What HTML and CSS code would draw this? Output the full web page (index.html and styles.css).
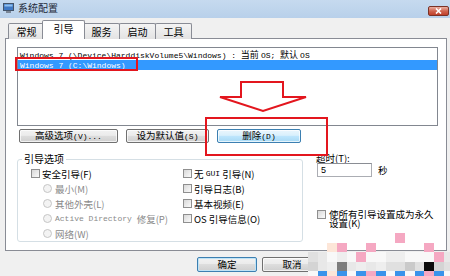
FILE: index.html
```html
<!DOCTYPE html>
<html>
<head>
<meta charset="utf-8">
<link rel="stylesheet" href="styles.css">
</head>
<body>
<div class="win">
  <div class="titlebar">
    <svg class="appicon" viewBox="0 0 11 10"><rect x="0.5" y="0.5" width="10" height="7" fill="#3f78c4" stroke="#44546a"/><rect x="1.5" y="1.5" width="8" height="2" fill="#8fc0f0"/><rect x="3" y="8" width="5" height="2" fill="#7a8696"/></svg>
    <span class="title">系统配置</span>
    <span class="close"><svg viewBox="0 0 7 6" width="7" height="6"><path d="M1 0.5 L6 5.5 M6 0.5 L1 5.5" stroke="#fff" stroke-width="1.6"/></svg></span>
  </div>
  <div class="main">
    <div class="tabs">
      <div class="tab">常规</div>
      <div class="tab sel">引导</div>
      <div class="tab">服务</div>
      <div class="tab">启动</div>
      <div class="tab">工具</div>
    </div>
    <div class="panel">
      <div class="listbox">
        <div class="row"><span class="m">Windows 7 (\Device\HarddiskVolume5\Windows) : </span>当前 <span class="m">OS; </span>默认 <span class="m">OS</span></div>
        <div class="row sel"><span class="m">Windows 7 (C:\Windows)</span></div>
      </div>
      <div class="btnrow">
        <button class="btn w1">高级选项<span class="m">(V)...</span></button>
        <button class="btn w2">设为默认值<span class="m">(S)</span></button>
        <button class="btn w3 hot">删除<span class="m">(D)</span></button>
      </div>
      <div class="lower">
        <fieldset class="group">
          <legend>引导选项</legend>
          <div class="cols">
            <div class="col left">
              <div class="opt"><span class="cb"></span>安全引导(F)</div>
              <div class="opt sub dis"><span class="rb"></span>最小(M)</div>
              <div class="opt sub dis"><span class="rb"></span>其他外壳(L)</div>
              <div class="opt sub dis"><span class="rb"></span><span class="m">Active Directory&nbsp;</span>修复(P)</div>
              <div class="opt sub dis"><span class="rb"></span>网络(W)</div>
            </div>
            <div class="col right">
              <div class="opt"><span class="cb"></span>无 <span class="m">GUI</span> 引导(N)</div>
              <div class="opt"><span class="cb"></span>引导日志(B)</div>
              <div class="opt"><span class="cb"></span>基本视频(E)</div>
              <div class="opt"><span class="cb"></span>OS 引导信息(O)</div>
            </div>
          </div>
        </fieldset>
        <div class="side">
          <div class="lbl">超时(T):</div>
          <div class="timeout"><span class="input">5</span><span>秒</span></div>
          <div class="perm"><span class="cb"></span><span class="ptext">使所有引导设置成为永久设置(K)</span></div>
        </div>
      </div>
    </div>
    <div class="footer">
      <button class="btn fb def">确定</button>
      <button class="btn fb">取消</button>
      <button class="btn fb">应用(A)</button>
    </div>
  </div>

  <div class="hl hl1"></div>
  <div class="hl hl2"></div>
  <svg class="arrow" viewBox="0 0 92 34"><polygon points="23,2 65,2 65,17 88,17 45,31 2,17 23,17" fill="#fff" stroke="#e3161e" stroke-width="2"/></svg>

  <div class="mosaic">
    <i class="c"></i><i class="c"></i><i class="c"></i><i class="c"></i><i class="c"></i><i class="c"></i><i class="c"></i><i class="c"></i><i class="c"></i><i class="p"></i><i class="c"></i><i class="c"></i><i class="c"></i><i class="c"></i><i class="c"></i>
    <i class="c"></i><i class="c"></i><i class="e"></i><i class="p"></i><i class="c"></i><i class="c"></i><i class="p"></i><i class="c"></i><i class="c"></i><i class="c"></i><i class="c"></i><i class="c"></i><i class="p"></i><i class="c"></i><i class="c"></i>
    <i class="g2"></i><i class="g3"></i><i class="w"></i><i class="g4"></i><i class="w"></i><i class="p"></i><i class="w"></i><i class="w"></i><i class="g4"></i><i class="g4"></i><i class="w"></i><i class="w"></i><i class="w"></i><i class="p"></i><i class="g3"></i>
    <i class="g1"></i><i class="g3"></i><i class="g4"></i><i class="dk"></i><i class="g3"></i><i class="g4"></i><i class="g3"></i><i class="g4"></i><i class="g2"></i><i class="g2"></i><i class="g5"></i><i class="g2"></i><i class="k"></i><i class="g1"></i><i class="g2"></i>
    <i class="w"></i><i class="b"></i><i class="e"></i><i class="b"></i><i class="w"></i><i class="b"></i><i class="p"></i><i class="b"></i><i class="w"></i><i class="b"></i><i class="w"></i><i class="b"></i><i class="p"></i><i class="b"></i><i class="w"></i>
  </div>
</div>
</body>
</html>
```
FILE: styles.css
```css
body { margin: 0; }
.win {
  width: 450px; height: 276px; position: relative; overflow: hidden;
  background: #f0f0f0;
  font-family: "Noto Sans CJK SC", "Noto Sans", sans-serif;
  font-size: 10px; line-height: 10px; color: #000;
}
.titlebar {
  height: 18px; display: flex; align-items: flex-start;
  background: linear-gradient(#c6daef, #b8d0ea);
}
.appicon { width: 11px; height: 10px; margin: 3px 4px 0 3px; flex: none; }
.title { margin-top: 3px; font-size: 10px; line-height: 10px; color: #1e2a3a; }
.close {
  margin-left: auto; margin-right: 1px; margin-top: 6px;
  width: 21px; height: 10px; box-sizing: border-box;
  border: 1px solid #7a3226; border-radius: 2px;
  background: linear-gradient(#eab0a2, #d06550 50%, #bf3f2a);
  display: flex; align-items: center; justify-content: center;
}
.main { padding: 2px 3px 0 5px; }
.tabs {
  display: flex; align-items: flex-end; height: 19px;
  padding-left: 3px; margin-bottom: -1px; position: relative; z-index: 1;
}
.tab {
  width: 37px; height: 16px; box-sizing: border-box;
  border: 1px solid #898c95; border-bottom: none; margin-right: -1px;
  background: linear-gradient(#f4f4f4, #e3e3e3);
  display: flex; align-items: center; justify-content: center;
  font-size: 10px; line-height: 10px; border-radius: 2px 2px 0 0;
}
.tab.sel {
  width: 43px; height: 19px; background: #fff;
  margin: 0 -2px 0 -2px; position: relative; z-index: 2;
  align-items: flex-start; padding-top: 3px;
}
.panel {
  height: 213px; box-sizing: border-box;
  border: 1px solid #898c95; background: #fff;
  padding: 8px 8px 0 11px;
}
.listbox {
  height: 79px; box-sizing: border-box;
  border: 1px solid #828790; padding-top: 2px;
}
.row { height: 10px; line-height: 10px; padding-left: 2px; white-space: nowrap; font-size: 9px; }
.row.sel { background: #3399ff; color: #fff; }
.m { font-family: "Liberation Mono", monospace; font-size: 8px; }
.btnrow { display: flex; gap: 8px; margin: 3px 0 0 2px; }
.btn {
  height: 14px; box-sizing: border-box; padding: 0;
  border: 1px solid #707070; border-radius: 2px;
  background: linear-gradient(#f2f2f2 0%, #ebebeb 45%, #dddddd 50%, #cfcfcf 100%);
  box-shadow: inset 0 0 0 1px rgba(255,255,255,0.7);
  font-family: inherit; font-size: 9.5px; line-height: 11px; color: #000;
  white-space: nowrap;
}
.w1 { width: 99px; }
.w2 { width: 83px; }
.w3 { width: 84px; }
.hot {
  border-color: #3c7fb1;
  background: linear-gradient(#eaf6fd 0%, #d9f0fc 45%, #bee6fd 50%, #a7d9f5 100%);
}
.lower { display: flex; margin-top: 11px; }
.group {
  margin: 0; padding: 0; width: 286px; height: 88px; box-sizing: border-box;
  border: 1px solid #d5dfe5; border-radius: 3px; min-width: 0;
}
.group legend { margin-left: 4px; padding: 0 2px; font-size: 10px; line-height: 10px; }
.cols { display: flex; padding: 2px 0 0 13px; }
.col.left { width: 152px; }
.opt { height: 15px; display: flex; align-items: center; white-space: pre; font-size: 9.5px; line-height: 10px; }
.cb {
  width: 9px; height: 9px; box-sizing: border-box; flex: none;
  border: 1px solid #8f8f8f; margin-right: 2px;
  background: linear-gradient(135deg, #d8d8d8, #fbfbfb);
}
.sub { padding-left: 12px; }
.rb {
  width: 9px; height: 9px; box-sizing: border-box; flex: none; border-radius: 50%;
  border: 1px solid #c6c6c6; background: #f3f3f3; margin-right: 3px;
}
.dis { color: #8a8a8a; }
.side { margin-left: 13px; }
.lbl { height: 10px; margin-top: -1px; font-size: 9.5px; }
.timeout { display: flex; align-items: center; gap: 6px; margin-left: 1px; font-size: 9.5px; }
.input {
  width: 55px; height: 14px; box-sizing: border-box;
  border: 1px solid #abadb3; border-top-color: #8a8d94;
  padding-left: 3px; line-height: 12px; background: #fff;
  font-family: "Liberation Sans", sans-serif; font-size: 9px;
}
.perm { display: flex; align-items: flex-start; margin: 33px 0 0 1px; }
.perm .cb { margin-right: 3px; }
.ptext { width: 106px; font-size: 9.5px; line-height: 9px; }
.footer { display: flex; gap: 5px; margin: 6px 0 0 192px; }
.fb { width: 60px; height: 15px; }
.def { border-color: #3c7fb1; box-shadow: inset 0 0 0 1px #bfe3f6; }
.hl { position: absolute; border: 2px solid #e3161e; box-sizing: border-box; }
.hl1 { left: 15px; top: 57px; width: 123px; height: 14px; }
.hl2 { left: 205px; top: 117px; width: 123px; height: 39px; }
.arrow { position: absolute; left: 218px; top: 80px; width: 92px; height: 34px; }
.mosaic {
  position: absolute; left: 308px; top: 233px;
  display: grid;
  grid-template-columns: repeat(15, 9.7px);
  grid-template-rows: repeat(5, 9.5px);
}
.mosaic i { display: block; }
.mosaic .c { background: transparent; }
.mosaic .p { background: #f5a8c2; }
.mosaic .b { background: #3a93ea; }
.mosaic .e { background: #fde6d8; }
.mosaic .w { background: #f8f8f8; }
.mosaic .g1 { background: #d4d4d4; }
.mosaic .g2 { background: #e0e0e0; }
.mosaic .g3 { background: #e8e8e8; }
.mosaic .g4 { background: #eeeeee; }
.mosaic .g5 { background: #cacaca; }
.mosaic .dk { background: #7d7d7d; }
.mosaic .k { background: #0b0b0b; }
```
